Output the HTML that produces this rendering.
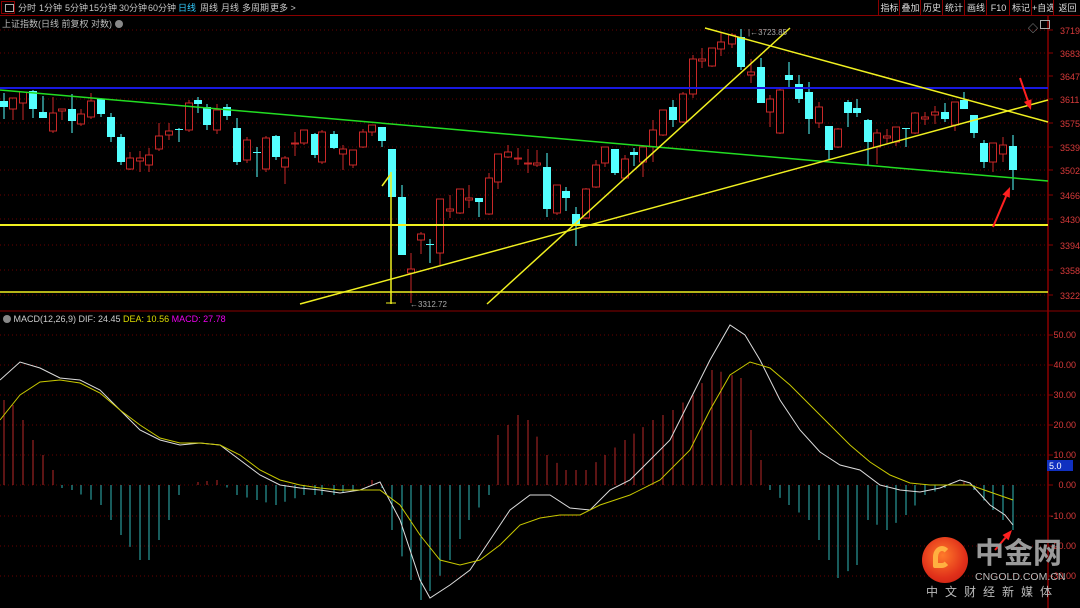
<!DOCTYPE html>
<html><head><meta charset="utf-8">
<style>
html,body{margin:0;padding:0;background:#000;width:1080px;height:608px;overflow:hidden;font-family:"Liberation Sans","Noto Sans CJK SC",sans-serif}
#top{position:absolute;left:0;top:0;width:1080px;height:16px;border-bottom:1px solid #8a0000;box-sizing:border-box}
.tb{position:absolute;top:3px;font-size:9px;color:#c8c8c8;white-space:nowrap;line-height:10px}
.rb{position:absolute;top:0;height:15px;border-left:1px solid #8a0000;font-size:9px;color:#ddd;line-height:16px;text-align:center;white-space:nowrap;overflow:hidden}
</style></head><body>
<svg id="s" width="1080" height="608" style="position:absolute;left:0;top:0" xmlns="http://www.w3.org/2000/svg"></svg>
<div id="top">
<div style="position:absolute;left:1px;top:1px;width:14px;height:13px;border:1px solid #8a0000;box-sizing:border-box"><div style="position:absolute;left:3px;top:2px;width:7px;height:6px;border:1px solid #aaa"></div></div>
<div class="tb" style="left:18px">分时</div>
<div class="tb" style="left:39px">1分钟</div>
<div class="tb" style="left:65px">5分钟</div>
<div class="tb" style="left:89px">15分钟</div>
<div class="tb" style="left:119px">30分钟</div>
<div class="tb" style="left:148px">60分钟</div>
<div class="tb" style="left:178px;color:#3cf">日线</div>
<div class="tb" style="left:200px">周线</div>
<div class="tb" style="left:221px">月线</div>
<div class="tb" style="left:242px">多周期</div>
<div class="tb" style="left:270px">更多 &gt;</div>
<div class="rb" style="left:878px;width:21px">指标</div>
<div class="rb" style="left:899px;width:21px">叠加</div>
<div class="rb" style="left:920px;width:22px">历史</div>
<div class="rb" style="left:942px;width:22px">统计</div>
<div class="rb" style="left:964px;width:22px">画线</div>
<div class="rb" style="left:986px;width:23px">F10</div>
<div class="rb" style="left:1009px;width:22px">标记</div>
<div class="rb" style="left:1031px;width:22px">+自选</div>
<div class="rb" style="left:1053px;width:27px">返回</div>
</div>
<div style="position:absolute;left:2px;top:17px;font-size:9px;color:#bbb">上证指数(日线 前复权 对数) <span style="display:inline-block;width:8px;height:8px;border-radius:50%;background:#888;vertical-align:-1px"></span></div>
<div style="position:absolute;left:3px;top:314px;font-size:9px;color:#ccc"><span style="display:inline-block;width:8px;height:8px;border-radius:50%;background:#888;vertical-align:-1px"></span> MACD(12,26,9) DIF: 24.45 <span style="color:#dd0">DEA: 10.56</span> <span style="color:#e0e">MACD: 27.78</span></div>
<div style="position:absolute;left:1028px;top:20px;font-size:10px;color:#aaa">◇</div>
<div style="position:absolute;left:1040px;top:20px;width:10px;height:9px;border:1px solid #aaa;box-sizing:border-box"></div>
<div style="position:absolute;left:922px;top:537px;width:46px;height:46px;border-radius:50%;background:radial-gradient(circle at 45% 40%,#ff7a2a,#e0301a 60%,#c01a10)"></div>
<div style="position:absolute;left:933px;top:546px;width:18px;height:22px;border:5px solid #ffb040;border-radius:50% 50% 50% 10%;border-right-color:transparent;box-sizing:border-box"></div>
<div style="position:absolute;left:975px;top:538px;font-size:29px;font-weight:bold;color:#9a9a9a;line-height:32px">中金网</div>
<div style="position:absolute;left:975px;top:571px;font-size:10.5px;color:#bbb">CNGOLD.COM.CN</div>
<div style="position:absolute;left:926px;top:583px;font-size:12px;color:#bbb;letter-spacing:7px">中文财经新媒体</div>
<script>
var s=document.getElementById('s'),h='';
function L(x1,y1,x2,y2,c,w,d){h+='<line x1="'+x1+'" y1="'+y1+'" x2="'+x2+'" y2="'+y2+'" stroke="'+c+'" stroke-width="'+(w||1)+'"'+(d?' stroke-dasharray="'+d+'"':'')+'/>';}
function T(x,y,t,c,sz,a){h+='<text x="'+x+'" y="'+y+'" fill="'+c+'" font-size="'+(sz||9)+'" font-family="Liberation Sans, sans-serif"'+(a?' text-anchor="'+a+'"':'')+'>'+t+'</text>';}
var P=[[32,'3719'],[55,'3683'],[78,'3647'],[101,'3611'],[125,'3575'],[149,'3539'],[172,'3502'],[197,'3466'],[221,'3430'],[247,'3394'],[272,'3358'],[297,'3322']];
P.forEach(function(p){L(0,p[0]-2,1048,p[0]-2,'#6a0000',1,'1,3');L(1048,p[0]-2,1053,p[0]-2,'#8a0000');T(1060,p[0]+2,p[1],'#d83a3a',9);});
var M=[[335,'50.00'],[365,'40.00'],[395,'30.00'],[425,'20.00'],[455,'10.00'],[485,'0.00'],[516,'-10.00'],[546,'-20.00'],[576,'-30.00']];
M.forEach(function(p){L(0,p[0],1048,p[0],'#6a0000',1,'1,3');L(1048,p[0],1053,p[0],'#8a0000');T(1076,p[0]+3,p[1],'#d83a3a',9,'end');});
L(1048,16,1048,608,'#8a0000',1.5);L(0,311,1080,311,'#8a0000',1);
h+='<rect x="1047" y="460" width="26" height="11" fill="#1030c0"/>';T(1049,469,'5.0','#fff',9);
var C=[[4,101,107,93,119,0],[13,98,109,98,120,1],[23,92,103,92,120,1],[33,91,109,90,118,0],[43,112,118,96,118,0],[53,113,131,97,133,1],[62,109,111,109,120,1],[72,109,121,94,133,0],[81,114,124,109,126,1],[91,101,117,93,119,1],[101,99,114,98,117,0],[111,117,137,113,142,0],[121,137,162,134,165,0],[130,158,169,152,170,1],[140,158,161,151,172,1],[149,155,165,148,172,1],[159,136,149,123,151,1],[169,131,135,123,140,1],[179,129,130,128,142,0],[189,103,130,100,132,1],[198,100,104,97,113,0],[207,107,125,104,130,0],[217,110,130,104,134,1],[227,107,116,104,120,0],[237,128,162,118,165,0],[247,140,160,137,163,1],[257,152,153,147,177,0],[266,138,169,136,172,1],[276,136,157,135,160,0],[285,158,167,156,184,1],[295,143,144,132,156,1],[304,130,143,130,145,1],[315,134,155,133,158,0],[322,132,162,130,164,1],[334,134,148,131,149,0],[343,149,154,145,170,1],[353,150,165,150,168,1],[363,132,147,129,148,1],[372,125,132,125,136,1],[382,127,141,127,147,0],[392,149,197,149,197,0],[402,197,255,185,255,0],[411,269,273,253,303,1],[421,234,240,232,254,1],[430,244,245,239,263,0],[440,199,253,199,265,1],[450,209,211,195,218,1],[460,189,213,189,214,1],[469,198,200,185,208,1],[479,198,202,198,217,0],[489,178,214,173,215,1],[498,154,182,154,189,1],[508,152,157,145,158,1],[518,158,159,148,165,1],[528,163,164,149,173,1],[537,163,165,150,167,1],[547,167,209,153,217,0],[557,185,213,185,215,1],[566,191,198,187,211,0],[576,214,224,207,246,0],[586,189,218,188,219,1],[596,165,187,160,188,1],[605,147,163,147,167,1],[615,149,173,149,175,0],[625,159,178,155,179,1],[634,152,155,148,166,0],[643,147,162,145,177,1],[653,130,147,120,162,1],[663,110,135,110,136,1],[673,107,120,100,127,0],[683,94,122,92,123,1],[693,59,94,55,98,1],[702,59,61,48,68,1],[712,48,66,48,67,1],[721,42,49,33,56,1],[732,35,44,33,48,1],[741,37,67,29,70,0],[751,72,75,59,83,1],[761,67,103,58,103,0],[770,99,112,95,127,1],[780,90,133,89,134,1],[789,75,80,62,87,0],[799,84,99,75,103,0],[809,92,119,82,134,0],[819,107,123,102,128,1],[829,126,150,126,160,0],[838,129,147,128,148,1],[848,102,113,100,127,0],[857,108,113,99,117,0],[868,120,142,119,165,0],[877,133,147,129,164,1],[887,136,138,129,143,1],[896,127,142,127,146,1],[906,128,129,128,147,0],[915,113,133,112,134,1],[925,117,119,112,125,1],[935,112,115,106,124,1],[945,112,119,103,122,0],[955,102,125,102,131,1],[964,100,109,92,109,0],[974,115,133,115,138,0],[984,143,162,140,168,0],[993,143,162,143,172,1],[1003,145,154,137,162,1],[1013,146,170,135,190,0]];
var H=[[4,400],[13,405],[23,420],[33,440],[43,455],[53,470],[62,488],[72,490],[82,495],[101,505],[111,520],[121,535],[140,560],[150,560],[159,540],[169,520],[179,495],[189,485],[198,482],[217,480],[237,495],[257,500],[276,505],[304,495],[334,495],[353,490],[372,480],[382,488],[392,530],[411,580],[421,600],[431,590],[450,560],[469,520],[489,495],[498,435],[518,415],[528,420],[547,455],[566,470],[586,470],[605,455],[625,440],[653,420],[673,410],[693,395],[712,370],[722,372],[741,378],[751,430],[761,460],[770,490],[789,505],[809,520],[829,560],[838,578],[857,565],[868,520],[887,530],[906,515],[925,495],[945,488],[964,482],[974,490],[993,510],[1013,530]];
function hv(x){for(var i=0;i<H.length-1;i++){if(x<=H[i+1][0]){var a=H[i],b=H[i+1];return a[1]+(b[1]-a[1])*(x-a[0])/(b[0]-a[0]);}}return H[H.length-1][1];}
C.forEach(function(c){var y=hv(c[0]);if(Math.abs(y-485)>1)L(c[0],485,c[0],y,y<485?'#b82828':'#30b8b8',1);});
var DIF=[[0,380],[20,362],[40,368],[60,378],[80,380],[100,390],[120,410],[140,430],[160,440],[180,445],[200,443],[220,445],[240,460],[260,475],[280,485],[300,488],[320,490],[340,493],[360,490],[380,482],[400,520],[420,580],[430,598],[450,585],[470,570],[490,540],[510,510],[530,495],[550,495],[570,508],[590,510],[610,490],[630,480],[650,460],[670,440],[690,400],[710,360],[730,325],[745,335],[760,360],[780,400],[800,430],[820,452],[840,465],[860,470],[880,485],[900,490],[920,492],[940,488],[960,480],[970,483],[990,505],[1005,515],[1013,525]];
var DEA=[[0,420],[20,395],[40,382],[60,380],[80,383],[100,393],[120,410],[140,425],[160,438],[180,443],[200,443],[220,445],[240,455],[260,470],[280,480],[300,485],[320,488],[340,490],[360,490],[380,490],[400,505],[420,535],[440,560],[460,565],[480,560],[500,545],[520,525],[540,518],[560,515],[580,515],[600,505],[630,495],[660,480],[690,450],[710,410],[730,375],[750,362],[770,368],[790,385],[810,405],[830,425],[850,445],[870,462],[890,475],[910,483],[930,485],[950,485],[970,485],[990,492],[1013,500]];
h+='<polyline fill="none" stroke="#ddd" stroke-width="1" points="'+DIF.join(' ')+'"/>';
h+='<polyline fill="none" stroke="#c8c800" stroke-width="1" points="'+DEA.join(' ')+'"/>';
C.forEach(function(c){var x=c[0],col=c[5]?'#c82828':'#54ffff';
 if(c[5]){L(x,c[3],x,c[1],col);L(x,c[2],x,c[4],col);h+='<rect x="'+(x-3.5)+'" y="'+c[1]+'" width="7" height="'+Math.max(1,c[2]-c[1])+'" fill="none" stroke="'+col+'" stroke-width="1"/>';}
 else{L(x,c[3],x,c[4],col);h+='<rect x="'+(x-4)+'" y="'+c[1]+'" width="8" height="'+Math.max(1,c[2]-c[1])+'" fill="'+col+'"/>';}});
L(0,88,1048,88,'#1818e0',2);
L(0,90,1048,181,'#22dd22',1.5);
L(0,225,1048,225,'#f0f020',2);L(0,292,1048,292,'#f0f020',1.5);
L(300,304,1048,100,'#f0f020',1.5);L(487,304,790,28,'#f0f020',1.5);L(705,28,1048,122,'#f0f020',1.5);
L(391,172,391,304,'#f0f020',1.5);L(382,186,390,175,'#f0f020',1.5);L(386,303,396,303,'#f0f020',1);
T(748,35,'|←3723.85','#aaa',8);T(410,307,'←3312.72','#aaa',8);
function A(x1,y1,x2,y2){var dx=x2-x1,dy=y2-y1,l=Math.hypot(dx,dy),ux=dx/l,uy=dy/l,px=-uy,py=ux;
 var bx=x2-ux*10,by=y2-uy*10;L(x1,y1,bx,by,'#ff2020',2);
 h+='<polygon fill="#ff2020" points="'+x2+','+y2+' '+(bx+px*4)+','+(by+py*4)+' '+(bx-px*4)+','+(by-py*4)+'"/>';}
A(1020,78,1031,110);A(993,227,1010,187);A(995,550,1012,530);
s.innerHTML=h;
</script>
</body></html>
